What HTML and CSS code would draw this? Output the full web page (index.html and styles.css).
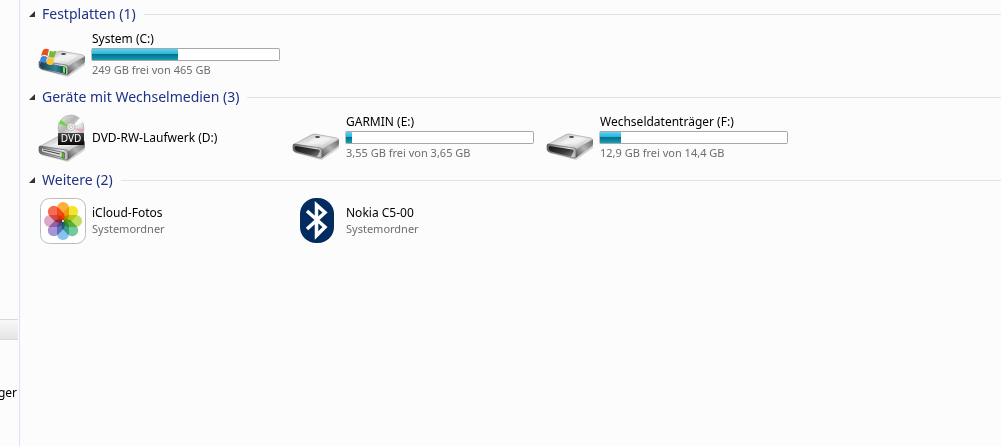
FILE: index.html
```
<!DOCTYPE html>
<html lang="de">
<head>
<meta charset="utf-8">
<title>Computer</title>
<link rel="stylesheet" href="styles.css">
</head>
<body>
<svg class="defs" width="0" height="0" aria-hidden="true">
  <defs>
    <linearGradient id="top" x1="0" y1="0" x2="1" y2="1"><stop offset="0" stop-color="#b4b4b4"/><stop offset=".5" stop-color="#ececec"/><stop offset="1" stop-color="#b0b0b0"/></linearGradient>
    <linearGradient id="side" x1="0" y1="1" x2="1" y2="0"><stop offset="0" stop-color="#4c4c4c"/><stop offset=".5" stop-color="#b4b4b4"/><stop offset="1" stop-color="#666"/></linearGradient>
    <linearGradient id="front" x1="0" y1="0" x2="1" y2="0"><stop offset="0" stop-color="#666"/><stop offset=".8" stop-color="#e4e4e4"/><stop offset="1" stop-color="#aaa"/></linearGradient>
    <linearGradient id="slot" x1="0" y1="0" x2="1" y2="1"><stop offset="0" stop-color="#161616"/><stop offset=".6" stop-color="#3a3a3a"/><stop offset="1" stop-color="#888"/></linearGradient>
    <linearGradient id="teal" x1="0" y1="0" x2="1" y2="0"><stop offset="0" stop-color="#1b3f52"/><stop offset=".6" stop-color="#2f8296"/><stop offset="1" stop-color="#163844"/></linearGradient>
    <linearGradient id="disc" x1="0" y1="0" x2="1" y2="1"><stop offset="0" stop-color="#f0f0f0"/><stop offset=".4" stop-color="#b4b4b4"/><stop offset=".6" stop-color="#e8e8e8"/><stop offset="1" stop-color="#999"/></linearGradient>
    <linearGradient id="label" x1="0" y1="0" x2="0" y2="1"><stop offset="0" stop-color="#444"/><stop offset="1" stop-color="#080808"/></linearGradient>
    <symbol id="shell" viewBox="0 0 48 48">
      <path d="M3 39 30 46 47 34 47 29Z" fill="#000" opacity=".16"/>
      <path d="M30 34 46 25Q47 25 47 27V30Q47 32 45 33L31 43Q30 44 29 44Z" fill="url(#side)"/>
      <path d="M1 31 19 21Q21 20 23 20L45 24Q47 25 46 26L31 35Q30 36 28 35L2 32Z" fill="url(#top)" stroke="#888" stroke-width=".5"/>
      <path d="M1 31Q1 30 3 30L28 34Q30 34 30 36V43Q30 44 28 44L3 38Q1 37 1 35Z" fill="url(#front)" stroke="#555" stroke-width=".6"/>
      <path d="M15 29 24 22 40 25 30 31Z" fill="#fff" opacity=".4"/>
      <ellipse cx="25.500" cy="23" rx="2.500" ry="1" fill="#444"/>
    </symbol>
    <symbol id="removable" viewBox="0 0 48 48">
      <use href="#shell"/>
      <path d="M3.500 32 26 35.500Q28.500 36 27.500 38L25 43 5 37.500Q2.500 36 2.500 34Z" fill="url(#slot)"/>
    </symbol>
  </defs>
</svg>
<div class="window">
  <nav class="sidebar" aria-label="Navigation">
    <div class="selected"></div>
    <a class="node" href="#f">ger</a>
  </nav>
  <main class="content">
    <section class="group">
      <h2 class="heading"><button class="toggle" type="button" aria-expanded="true"><svg class="arrow" viewBox="0 0 6 6" aria-hidden="true"><path d="M6 0V6H0Z"/></svg>Festplatten (1)</button></h2>
      <div class="tiles">
        <a class="tile" href="#c">
          <svg class="icon" viewBox="0 0 48 48" aria-hidden="true">
            <use href="#shell"/>
            <path d="M3 31 26 35.500Q28 36 28 38V43L5 38Q2 37 2 34Z" fill="url(#teal)"/>
            <path d="M25 36 27 36.500V42L25 41.500Z" fill="#5cff26"/>
            <path d="M5 19Q8 17 11 18.500L9.500 25Q6 23 3 25Z" fill="#e8501c"/>
            <path d="M12 19.500Q15 21.500 18.500 19.500L16.500 26Q14 27.500 10.500 25.500Z" fill="#7bb935"/>
            <path d="M3 26Q6 24 9 26L7.500 32Q4.500 30 1.500 32Z" fill="#3e86d8"/>
            <path d="M10 26.500Q13.500 28.500 16.500 27L14.500 33.500Q12 35 8.500 32.500Z" fill="#fbc22c"/>
          </svg>
          <span class="info"><span class="name">System (C:)</span><span class="bar" role="meter" aria-label="Belegt" aria-valuenow="46" aria-valuemin="0" aria-valuemax="100"><span class="fill" style="width:46%"></span></span><span class="detail">249 GB frei von 465 GB</span></span>
        </a>
      </div>
    </section>
    <section class="group">
      <h2 class="heading"><button class="toggle" type="button" aria-expanded="true"><svg class="arrow" viewBox="0 0 6 6" aria-hidden="true"><path d="M6 0V6H0Z"/></svg>Geräte mit Wechselmedien (3)</button></h2>
      <div class="tiles">
        <a class="tile" href="#d">
          <svg class="icon" viewBox="0 0 48 48" aria-hidden="true">
            <use href="#shell" y="2"/>
            <path d="M3 34 26 38.500V44L4 38Z" fill="#ddd" stroke="#555" stroke-width=".7"/>
            <path d="M5 36 22 40" stroke="#444" stroke-width="1"/>
            <path d="M24 38.500 26.500 39V44.500L24 44Z" fill="#49c71c" stroke="#333" stroke-width=".4"/>
            <circle cx="33" cy="14" r="13" fill="url(#disc)" stroke="#aaa" stroke-width=".6"/>
            <path d="M33 14 21 9.500 23 6Z" fill="#60e02c"/>
            <path d="M33 14 42 4 45 8Z" fill="#fff"/>
            <path d="M33 14 45 15 45 18Z" fill="#ef9fce"/>
            <circle cx="33" cy="13" r="4" fill="#e8e8e8" stroke="#aaa" stroke-width=".6"/>
            <circle cx="33" cy="13" r="1.500" fill="#fff" stroke="#999" stroke-width=".5"/>
            <path d="M20 19H46V31H20Z" fill="url(#label)"/>
            <text class="disc-label" x="33" y="28" text-anchor="middle">DVD</text>
          </svg>
          <span class="info"><span class="name">DVD-RW-Laufwerk (D:)</span></span>
        </a>
        <a class="tile" href="#e">
          <svg class="icon" viewBox="0 0 48 48" aria-hidden="true"><use href="#removable"/></svg>
          <span class="info"><span class="name">GARMIN (E:)</span><span class="bar" role="meter" aria-label="Belegt" aria-valuenow="3" aria-valuemin="0" aria-valuemax="100"><span class="fill" style="width:3%"></span></span><span class="detail">3,55 GB frei von 3,65 GB</span></span>
        </a>
        <a class="tile" href="#f">
          <svg class="icon" viewBox="0 0 48 48" aria-hidden="true"><use href="#removable"/></svg>
          <span class="info"><span class="name">Wechseldatenträger (F:)</span><span class="bar" role="meter" aria-label="Belegt" aria-valuenow="11" aria-valuemin="0" aria-valuemax="100"><span class="fill" style="width:11%"></span></span><span class="detail">12,9 GB frei von 14,4 GB</span></span>
        </a>
      </div>
    </section>
    <section class="group">
      <h2 class="heading"><button class="toggle" type="button" aria-expanded="true"><svg class="arrow" viewBox="0 0 6 6" aria-hidden="true"><path d="M6 0V6H0Z"/></svg>Weitere (2)</button></h2>
      <div class="tiles">
        <a class="tile" href="#fotos">
          <svg class="icon" viewBox="0 0 48 48" aria-hidden="true">
            <rect x="2.500" y="1.500" width="45" height="45" rx="9" fill="#fff" stroke="#bdbdbd"/>
            <g class="petals" transform="translate(25 24)">
              <rect x="-6" y="-19" width="12" height="19" rx="6" fill="#fbaf3c"/>
              <rect x="-6" y="-19" width="12" height="19" rx="6" fill="#f2e62c" transform="rotate(45)"/>
              <rect x="-6" y="-19" width="12" height="19" rx="6" fill="#c0de62" transform="rotate(90)"/>
              <rect x="-6" y="-19" width="12" height="19" rx="6" fill="#74c99a" transform="rotate(135)"/>
              <rect x="-6" y="-19" width="12" height="19" rx="6" fill="#86c4ee" transform="rotate(180)"/>
              <rect x="-6" y="-19" width="12" height="19" rx="6" fill="#a894d0" transform="rotate(225)"/>
              <rect x="-6" y="-19" width="12" height="19" rx="6" fill="#dca8c8" transform="rotate(270)"/>
              <rect x="-6" y="-19" width="12" height="19" rx="6" fill="#f86a54" transform="rotate(315)"/>
            </g>
            <circle cx="25" cy="24" r="1" fill="#fff"/>
          </svg>
          <span class="info"><span class="name">iCloud-Fotos</span><span class="detail">Systemordner</span></span>
        </a>
        <a class="tile" href="#nokia">
          <svg class="icon" viewBox="0 0 48 48" aria-hidden="true">
            <rect x="8" y="1" width="34" height="45" rx="16" fill="#022c5f"/>
            <path d="M15 14 33 30 24.500 38.500V8L33 15.500 15 32" fill="none" stroke="#fff" stroke-width="3.500" stroke-miterlimit="6"/>
          </svg>
          <span class="info"><span class="name">Nokia C5-00</span><span class="detail">Systemordner</span></span>
        </a>
      </div>
    </section>
  </main>
</div>
</body>
</html>
```
FILE: styles.css
```
* { box-sizing: border-box; }
body {
  margin: 0;
  background: #fcfcfc;
  color: #000;
  font: 12px/16px "Noto Sans", "Open Sans", sans-serif;
}
a { color: inherit; text-decoration: none; }
.defs { position: absolute; }
.window { display: flex; min-height: 100vh; }
.sidebar {
  display: flex;
  flex-direction: column;
  flex: none;
  width: 20px;
  padding-top: 319px;
  border-right: 1px solid #d6e5f5;
  overflow: hidden;
}
.selected {
  height: 21px;
  margin-right: 1px;
  border: solid #d9d9d9;
  border-width: 1px 0;
  background: linear-gradient(#f8f8f8, #e5e5e5);
}
.node { margin: 45px 2px 0 0; align-self: flex-end; }
.content { flex: 1; min-width: 0; padding-top: 1px; }
.group { padding-bottom: 6px; }
.heading {
  display: flex;
  align-items: center;
  gap: 8px;
  margin: 0;
  padding-left: 9px;
}
.heading::after { content: ""; flex: 1; height: 1px; background: #e2e2e2; }
.toggle {
  display: flex;
  align-items: center;
  gap: 7px;
  padding: 0;
  border: 0;
  background: none;
  color: #1e3287;
  font: 14px/26px "Noto Sans", "Open Sans", sans-serif;
}
.arrow { width: 6px; height: 6px; fill: #333; }
.tiles { display: flex; flex-wrap: wrap; padding-left: 18px; }
.tile { display: flex; align-items: center; gap: 5px; width: 254px; height: 47px; margin-top: 4px; }
.icon { flex: none; width: 48px; height: 48px; }
.info { display: flex; flex-direction: column; width: 189px; }
.name, .detail { padding-left: 1px; white-space: nowrap; }
.detail { color: #6d6d6d; font-size: 11px; }
.bar {
  height: 13px;
  margin: 1px 0;
  border: 1px solid #a8a8a8;
  border-left-color: #c0c0c0;
  border-radius: 2px;
  background: #fff;
}
.fill {
  display: block;
  height: 100%;
  background: linear-gradient(#5ad4f0, #27aed2 50%, #04708c 50%, #14a0b8);
}
.disc-label { fill: #fff; font-size: 10px; }
.petals rect { mix-blend-mode: multiply; }
```
